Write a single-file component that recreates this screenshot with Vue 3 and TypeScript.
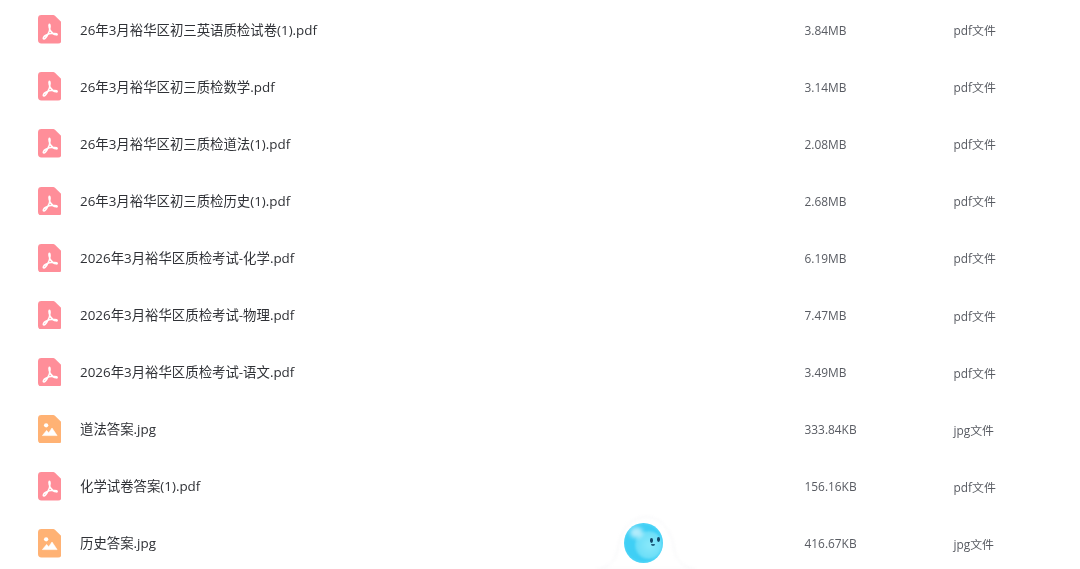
<script setup lang="ts">
interface FileRow { name: string; size: string; kind: 'pdf' | 'jpg' }
const rows: FileRow[] = [
  { name: '26年3月裕华区初三英语质检试卷(1).pdf', size: '3.84MB', kind: 'pdf' },
  { name: '26年3月裕华区初三质检数学.pdf', size: '3.14MB', kind: 'pdf' },
  { name: '26年3月裕华区初三质检道法(1).pdf', size: '2.08MB', kind: 'pdf' },
  { name: '26年3月裕华区初三质检历史(1).pdf', size: '2.68MB', kind: 'pdf' },
  { name: '2026年3月裕华区质检考试-化学.pdf', size: '6.19MB', kind: 'pdf' },
  { name: '2026年3月裕华区质检考试-物理.pdf', size: '7.47MB', kind: 'pdf' },
  { name: '2026年3月裕华区质检考试-语文.pdf', size: '3.49MB', kind: 'pdf' },
  { name: '道法答案.jpg', size: '333.84KB', kind: 'jpg' },
  { name: '化学试卷答案(1).pdf', size: '156.16KB', kind: 'pdf' },
  { name: '历史答案.jpg', size: '416.67KB', kind: 'jpg' },
]
</script>

<template>
  <main class="page">
    <ul class="list">
      <li v-for="row in rows" :key="row.name" class="row">
        <svg class="icon" viewBox="0 0 24 29" aria-hidden="true">
          <path
            :fill="row.kind === 'pdf' ? '#ff8e99' : '#ffb274'"
            d="M3.500 0H15.500a2.500 2.500 0 0 1 1.800.7L23.300 6.700a2.500 2.500 0 0 1 .7 1.800V25.500a3.500 3.500 0 0 1-3.500 3.500H3.500A3.500 3.500 0 0 1 0 25.500V3.500A3.500 3.500 0 0 1 3.500 0Z"
          />
          <g v-if="row.kind === 'pdf'" fill="none" stroke="#fff" stroke-width="1.600" stroke-linejoin="round" stroke-linecap="round">
            <path d="M11.500 9.500c-.8 1 .2 4.800 1.400 6.800 1.400 2.300 3.600 3.700 5.800 3.900 1 .1 1.200-.8.300-1.100-3-.8-8.200-.2-11.400 1.800-2 1.300-2.700 3-1.800 3.400.9.500 2.400-1 3.600-3.200 1.500-2.500 3-6.800 2.900-9.400 0-1.500-.4-2.600-.8-2.200Z" />
          </g>
          <g v-else fill="#fff" stroke="#fff" stroke-width="0.600" stroke-linejoin="round">
            <circle cx="8.300" cy="10.500" r="2.200" stroke="none" />
            <path d="M4.500 21 8.800 15.700l2.200 2.300 3.300-4.800 5.200 7.800Z" />
          </g>
        </svg>
        <span class="name">{{ row.name }}</span>
        <span class="size">{{ row.size }}</span>
        <span class="type">{{ row.kind }}文件</span>
      </li>
    </ul>
    <div class="assistant" aria-hidden="true">
      <svg class="halo" viewBox="0 0 100 59">
        <path d="M0 59C14 58 20 50 22 38 25 18 36 7 50 7s25 11 28 31c2 12 8 20 22 21Z" fill="#fff" stroke="#f2f3f6" stroke-width="1" />
      </svg>
      <div class="blob">
        <span class="face"></span>
        <span class="shine"></span>
        <span class="eye left"></span>
        <span class="eye right"></span>
        <span class="mouth"></span>
      </div>
    </div>
  </main>
</template>

<style scoped>
.page {
  position: relative;
  width: 1080px;
  height: 569px;
  overflow: hidden;
  background: #fff;
  font-family: "Open Sans", "Noto Sans CJK SC", sans-serif;
}
.list {
  margin: 0;
  padding: 1px 0 0 37.500px;
  list-style: none;
}
.row {
  display: flex;
  align-items: center;
  height: 57.100px;
}
.icon {
  flex: none;
  width: 23.500px;
  height: 28.500px;
  filter: blur(0.3px);
}
.name {
  width: 724.500px;
  margin: 0 0 2px 19px;
  font-size: 13.400px;
  color: #2f3136;
  filter: blur(0.2px);
}
.size,
.type {
  font-size: 11.900px;
  color: #585b62;
  filter: blur(0.2px);
}
.size {
  width: 149px;
}
.assistant {
  position: absolute;
  left: 596px;
  top: 510px;
  width: 100px;
  height: 59px;
}
.halo {
  position: absolute;
  inset: 0;
  width: 100%;
  height: 100%;
  filter: blur(1.500px);
}
.blob {
  position: absolute;
  left: 28px;
  top: 13px;
  width: 38.500px;
  height: 40px;
  overflow: hidden;
  border-radius: 50%;
  background: radial-gradient(circle at 50% 50%, #3fd0f5 0, #3fcff5 62%, #7ae2fb 92%, #a8edfc 100%);
  filter: blur(0.600px);
}
.face {
  position: absolute;
  left: 11px;
  top: 8px;
  width: 27px;
  height: 28px;
  border-radius: 50%;
  background: radial-gradient(circle at 55% 50%, #8ae9fb 0, #6fdff8 60%, rgba(90, 215, 246, 0) 100%);
  filter: blur(1px);
}
.shine {
  position: absolute;
  left: 6px;
  top: 4px;
  width: 13px;
  height: 11px;
  border-radius: 50%;
  background: rgba(255, 255, 255, 0.6);
  filter: blur(2px);
}
.eye {
  position: absolute;
  width: 3.500px;
  height: 5px;
  border-radius: 50%;
  background: #12496b;
}
.eye.left { left: 25.800px; top: 15.200px; }
.eye.right { left: 32.800px; top: 13.800px; }
.mouth {
  position: absolute;
  left: 27px;
  top: 21px;
  width: 4px;
  height: 2px;
  border-radius: 0 0 4px 4px;
  background: #1f5f80;
}
</style>
